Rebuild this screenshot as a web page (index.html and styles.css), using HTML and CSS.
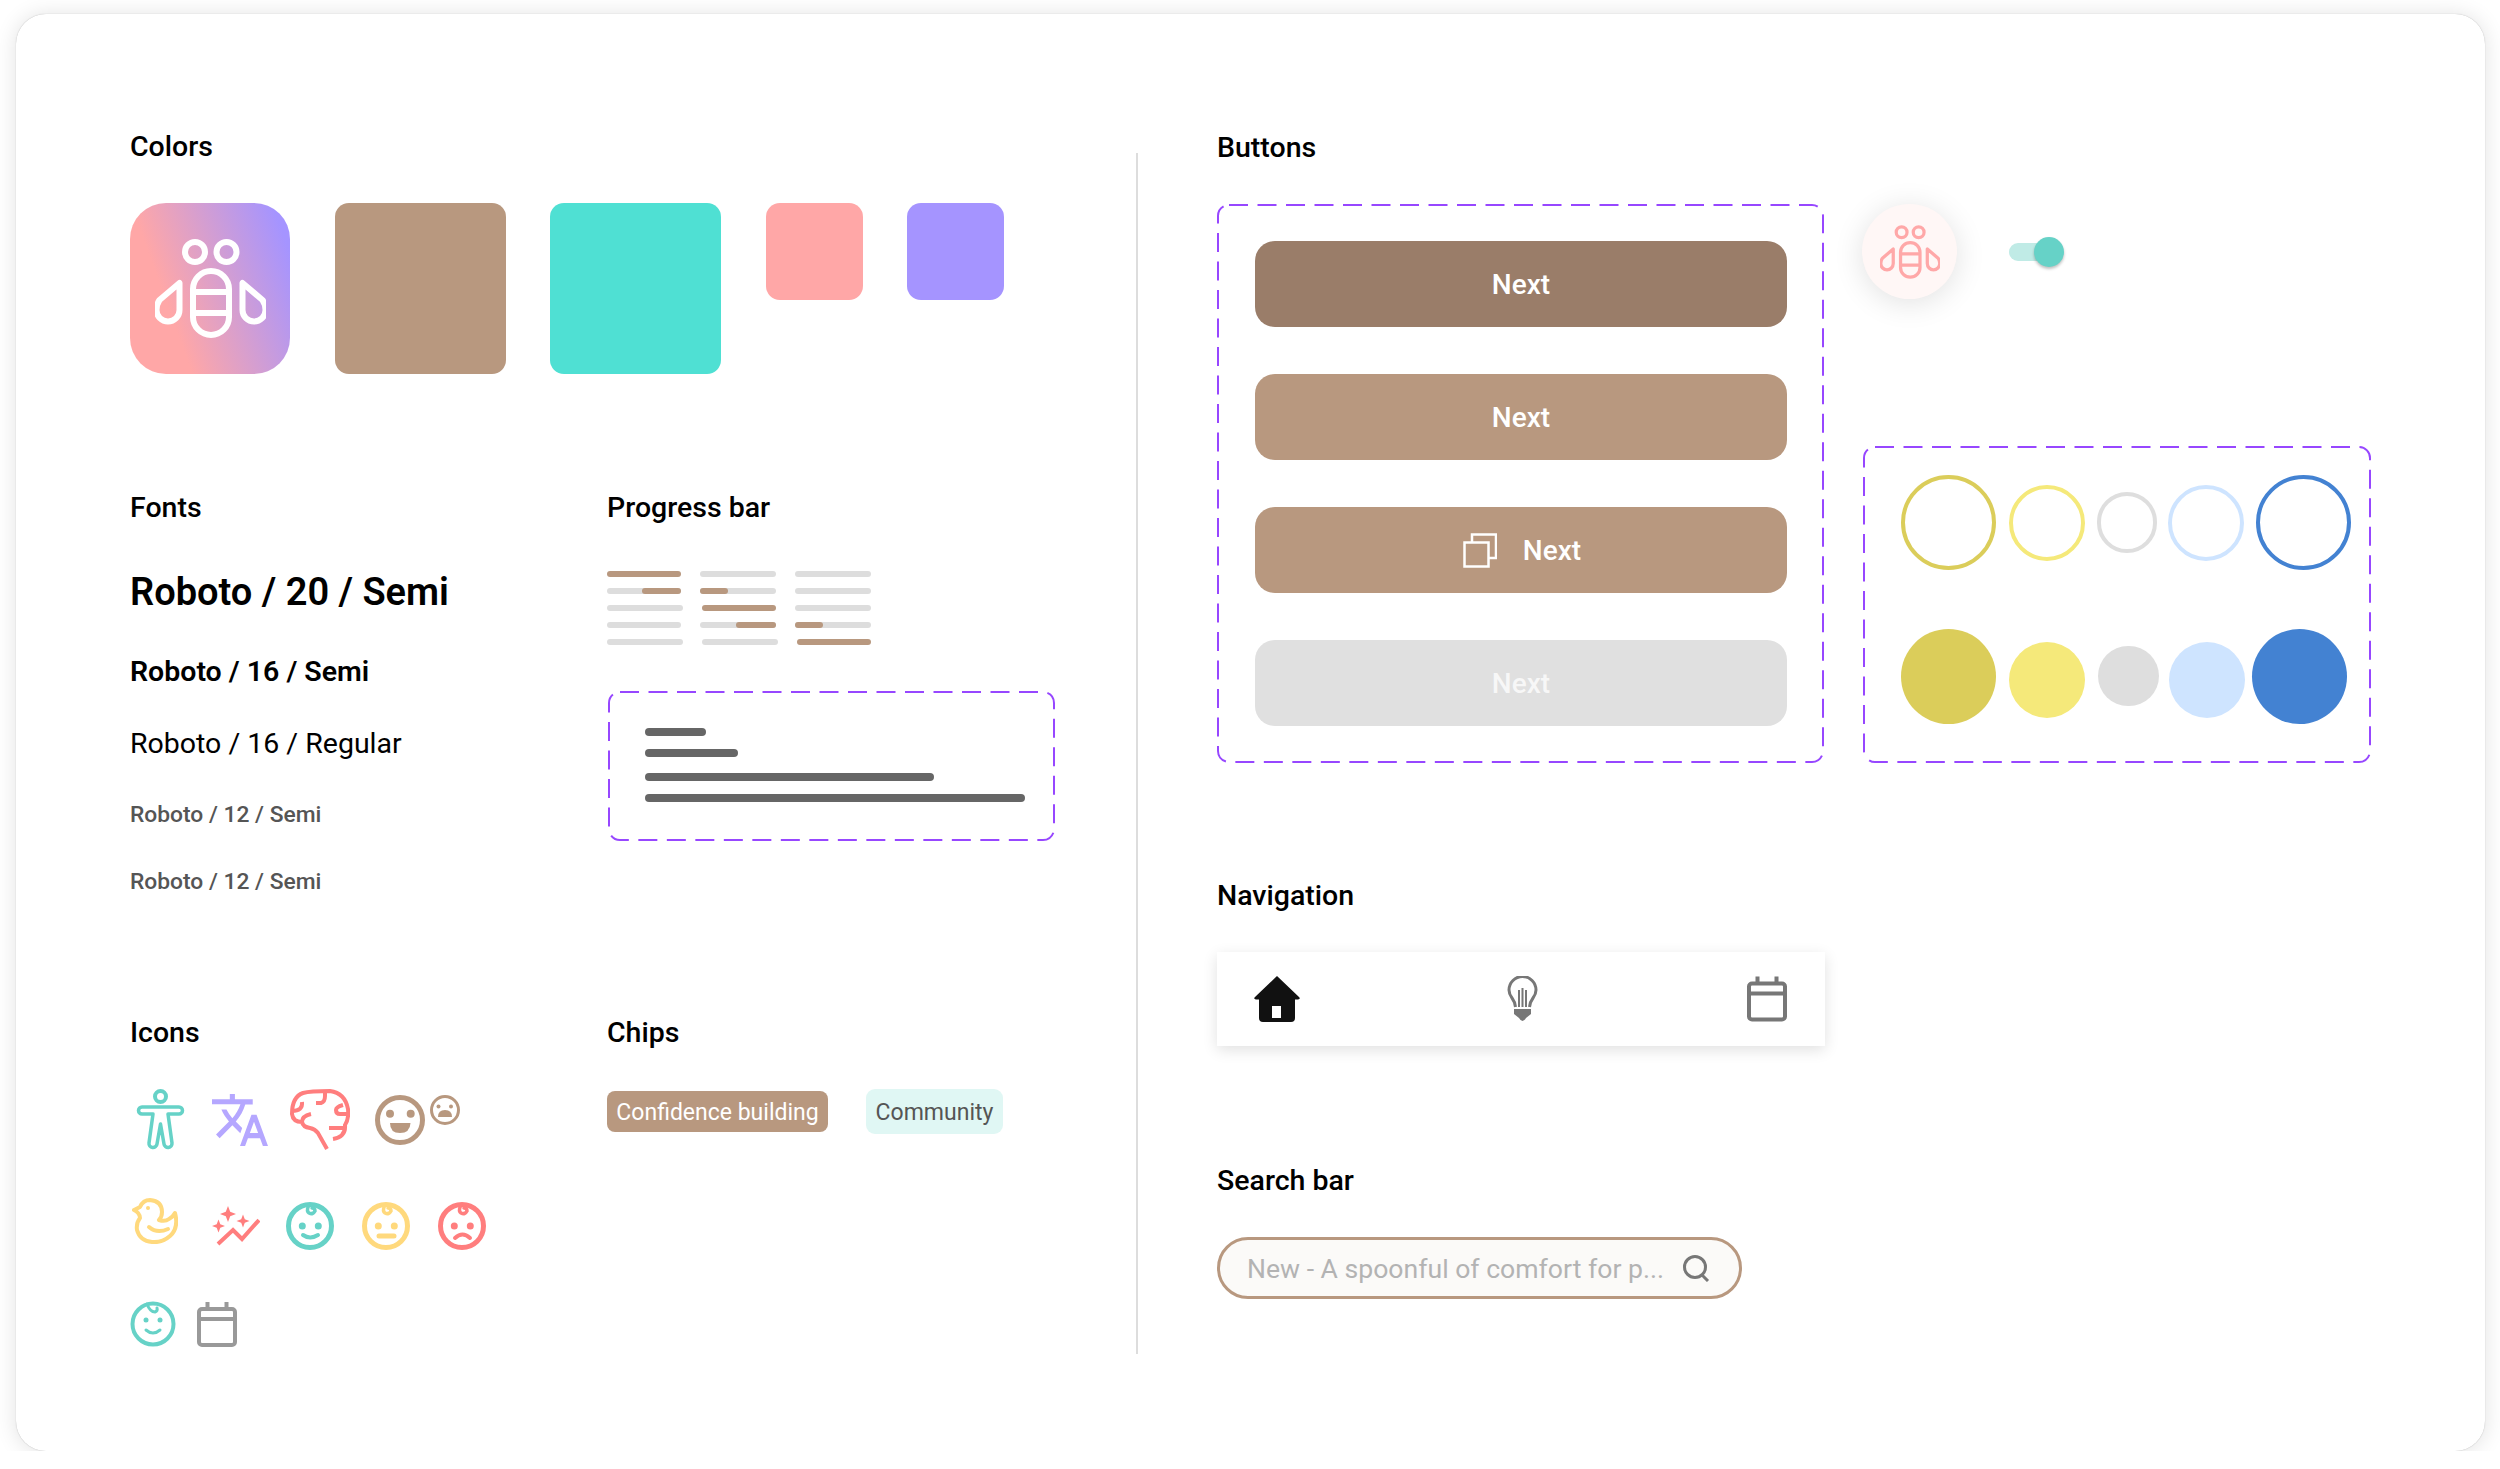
FILE: index.html
```html
<!DOCTYPE html>
<html lang="en">
<head>
    <meta charset="UTF-8" />
    <title>Style guide</title>
    <link rel="stylesheet" href="styles.css">
</head>
<body>

<svg class="defs" aria-hidden="true">
    <symbol id="bee" viewBox="25 36 111 99">
        <g fill="none" stroke="currentColor" stroke-width="6" stroke-linejoin="round">
            <circle cx="65" cy="49" r="10" />
            <circle cx="96.5" cy="49" r="10" />
            <rect x="63" y="68" width="36" height="64" rx="18" />
            <path d="M63 89H99M63 110H99" />
            <path d="M49.5 80V107a11.5 11.5 0 0 1-23 0c0-4 1-7 3-10Z" />
            <path d="M112.5 80V107a11.5 11.5 0 0 0 23 0c0-4-1-7-3-10Z" />
        </g>
    </symbol>
    <symbol id="calendar" viewBox="0 0 40 45">
        <g fill="none" stroke="currentColor" stroke-width="4" stroke-linejoin="round">
            <rect x="2" y="7" width="36" height="36" rx="3" />
            <path d="M2 17H38M10.5 0V7M29.5 0V7" />
        </g>
    </symbol>
    <symbol id="baby" viewBox="0 0 48 48">
        <circle cx="24" cy="24" r="21.5" fill="none" stroke="currentColor" stroke-width="5" />
        <path d="M23 3Q20 9 23 11Q27 13 29 9Q29 6 26 6" fill="none" stroke="currentColor" stroke-width="3.5" stroke-linecap="round" />
        <circle cx="16.3" cy="24" r="3.5" fill="currentColor" />
        <circle cx="32.3" cy="24" r="3.5" fill="currentColor" />
    </symbol>
</svg>

<main class="board">
    <div class="col-left">
        <section>
            <h2>Colors</h2>
            <div class="swatches">
                <div class="swatch swatch-logo">
                    <svg class="logo-bee"><use href="#bee" /></svg>
                </div>
                <div class="swatch swatch-brown"></div>
                <div class="swatch swatch-teal"></div>
                <div class="swatch swatch-pink"></div>
                <div class="swatch swatch-purple"></div>
            </div>
        </section>

        <div class="split fonts-row">
            <section class="split-a">
                <h2>Fonts</h2>
                <p class="f20">Roboto / 20 / Semi</p>
                <p class="f16s">Roboto / 16 / Semi</p>
                <p class="f16r">Roboto / 16 / Regular</p>
                <p class="f12 f12-a">Roboto / 12 / Semi</p>
                <p class="f12 f12-b">Roboto / 12 / Semi</p>
            </section>
            <section>
                <h2>Progress bar</h2>
                <div class="progress-set">
                    <div class="progress-col">
                        <div class="track full" style="width:74px"></div>
                        <div class="track end" style="width:74px"><div class="fill" style="width:39px"></div></div>
                        <div class="track" style="width:76px"></div>
                        <div class="track" style="width:74px"></div>
                        <div class="track" style="width:76px"></div>
                    </div>
                    <div class="progress-col mid">
                        <div class="track" style="width:76px"></div>
                        <div class="track" style="width:76px"><div class="fill" style="width:28px"></div></div>
                        <div class="track full shift" style="width:74px"></div>
                        <div class="track end" style="width:76px"><div class="fill" style="width:40px"></div></div>
                        <div class="track shift" style="width:76px"></div>
                    </div>
                    <div class="progress-col">
                        <div class="track" style="width:76px"></div>
                        <div class="track" style="width:76px"></div>
                        <div class="track" style="width:76px"></div>
                        <div class="track" style="width:76px"><div class="fill" style="width:28px"></div></div>
                        <div class="track full shift" style="width:74px"></div>
                    </div>
                </div>
                <div class="dash-box bars-box">
                    <svg class="frame"><rect x="1" y="1" rx="11" /></svg>
                    <div class="bar" style="width:61px"></div>
                    <div class="bar" style="width:93px"></div>
                    <div class="bar bar-gap" style="width:289px"></div>
                    <div class="bar" style="width:380px"></div>
                </div>
            </section>
        </div>

        <div class="split icons-row">
            <section class="split-a">
                <h2>Icons</h2>
                <div class="icon-line line-1">
                    <svg class="ic-access" viewBox="0 0 49 61" fill="none" stroke="#66D2C7">
                        <circle cx="24.5" cy="7.5" r="5.5" stroke-width="4" />
                        <path stroke-width="3.5" stroke-linejoin="round" d="M6 18H43a3.5 3.5 0 0 1 0 7H32L36 54a4 4 0 0 1-8 1L24.5 35 21 55a4 4 0 0 1-8-1L17 25H6a3.5 3.5 0 0 1 0-7Z" />
                    </svg>
                    <svg class="ic-translate" viewBox="1 2 22 20" preserveAspectRatio="none" fill="#B5A7FF">
                        <path d="M12.87 15.07l-2.54-2.51.03-.03c1.74-1.94 2.98-4.17 3.71-6.53H17V4h-7V2H8v2H1v1.99h11.17C11.5 7.92 10.44 9.75 9 11.35 8.07 10.32 7.3 9.19 6.69 8h-2c.73 1.63 1.73 3.17 2.98 4.56l-5.09 5.02L4 19l5-5 3.11 3.11.76-2.04zM18.5 10h-2L12 22h2l1.12-3h4.75L21 22h2l-4.5-12zm-2.62 7l1.62-4.33L19.12 17h-3.24z" />
                    </svg>
                    <svg class="ic-brain" viewBox="0 0 60 61" fill="none" stroke="#FF7E7E" stroke-width="4">
                        <path d="M37 60L28 44Q25 40 20 39Q13 38 12 33Q3 33 2 25Q2 8 13 4Q20 2 40 2Q55 4 58 20Q59 30 55 36Q56 48 43 50" />
                        <path d="M2 22Q13 22 12 13M26 14H31Q35 13 35 7V2M58 25H50Q46 25 46 21Q46 18 53 16M12 33Q12 27 21 25M39 39H55" />
                    </svg>
                    <svg class="ic-smile" viewBox="0 0 50 50" fill="#B8987F">
                        <circle cx="25" cy="25" r="22.5" fill="none" stroke="#B8987F" stroke-width="5" />
                        <circle cx="15" cy="18.7" r="4" />
                        <circle cx="35.7" cy="18.7" r="4" />
                        <path d="M15 28H35.5Q35 38 25 38Q15 38 15 28Z" />
                    </svg>
                    <svg class="ic-sad" viewBox="0 0 30 30" fill="#B8987F">
                        <circle cx="15" cy="15" r="13.5" fill="none" stroke="#B8987F" stroke-width="3" />
                        <circle cx="8.5" cy="11.5" r="2" />
                        <circle cx="21" cy="11.5" r="2" />
                        <path d="M8 22Q8 15 15 15Q22 15 22 22Z" />
                    </svg>
                </div>
                <div class="icon-line line-2">
                    <svg class="ic-duck" viewBox="0 0 46 46" fill="none" stroke="#FFD97D" stroke-width="4" stroke-linejoin="round">
                        <path d="M2 12L8 9Q11 2 18 2Q30 3 30 14Q30 19 27 22Q33 24 37 21Q41 19 43 15Q47 30 38 38Q30 45 20 44Q8 43 5 32Q4 25 8 20Q8 15 2 12Z" />
                        <path d="M17 29Q25 36 36 31" stroke-linecap="round" />
                        <circle cx="16" cy="10" r="2" fill="#FFD97D" stroke="none" />
                    </svg>
                    <svg class="ic-spark" viewBox="0 0 48 41" fill="#FF7E7E">
                        <path d="M16 0L18.2 5.8 24 8 18.2 10.2 16 16 13.8 10.2 8 8 13.8 5.8Z" />
                        <path d="M31 8.5L32.8 13.2 37.5 15 32.8 16.8 31 21.5 29.2 16.8 24.5 15 29.2 13.2Z" />
                        <path d="M6.5 13.5L8.3 18.2 13 20 8.3 21.8 6.5 26.5 4.7 21.8 0 20 4.7 18.2Z" />
                        <path d="M6 38L21 24 30 33 47 14" fill="none" stroke="#FF7E7E" stroke-width="4" />
                    </svg>
                    <svg class="ic-baby baby-teal" viewBox="0 0 48 48">
                        <use href="#baby" />
                        <path d="M17 33Q24 38 32 33" fill="none" stroke="currentColor" stroke-width="4" stroke-linecap="round" />
                    </svg>
                    <svg class="ic-baby baby-yellow" viewBox="0 0 48 48">
                        <use href="#baby" />
                        <path d="M17 34H32" fill="none" stroke="currentColor" stroke-width="5" stroke-linecap="round" />
                    </svg>
                    <svg class="ic-baby baby-red" viewBox="0 0 48 48">
                        <use href="#baby" />
                        <path d="M17 36Q24.5 29 32 36" fill="none" stroke="currentColor" stroke-width="4" stroke-linecap="round" />
                    </svg>
                </div>
                <div class="icon-line line-3">
                    <svg class="ic-baby-sm" viewBox="0 0 46 46" fill="none" stroke="#66D2C7">
                        <circle cx="23" cy="23" r="20.5" stroke-width="4" />
                        <path d="M17 3Q20 11 25 11Q28 10 27 7" stroke-width="3" stroke-linecap="round" />
                        <circle cx="16" cy="19" r="2.5" fill="#66D2C7" stroke="none" />
                        <circle cx="30" cy="19" r="2.5" fill="#66D2C7" stroke="none" />
                        <path d="M16 29Q23 35 30 29" stroke-width="3" stroke-linecap="round" />
                    </svg>
                    <svg class="ic-cal-grey"><use href="#calendar" /></svg>
                </div>
            </section>
            <section>
                <h2>Chips</h2>
                <div class="chips">
                    <span class="chip chip-brown">Confidence building</span>
                    <span class="chip chip-mint">Community</span>
                </div>
            </section>
        </div>
    </div>

    <div class="divider"></div>

    <div class="col-right">
        <section>
            <h2>Buttons</h2>
            <div class="buttons-row">
                <div class="dash-box buttons-box">
                    <svg class="frame"><rect x="1" y="1" rx="11" /></svg>
                    <button class="btn btn-dark">Next</button>
                    <button class="btn">Next</button>
                    <button class="btn">
                        <svg class="ic-copy" viewBox="0 0 34 35" fill="none" stroke="#fff" stroke-width="2.5">
                            <rect x="1.5" y="9.5" width="24" height="24" />
                            <path d="M9 9V1.5H33V25H25.5" />
                        </svg>
                        Next
                    </button>
                    <button class="btn btn-off">Next</button>
                </div>
                <div class="side">
                    <div class="side-top">
                        <div class="bee-fab"><svg class="fab-bee"><use href="#bee" /></svg></div>
                        <div class="toggle"><span class="knob"></span></div>
                    </div>
                    <div class="dash-box dots-box">
                        <svg class="frame"><rect x="1" y="1" rx="11" /></svg>
                        <div class="dot-row outlined">
                            <span class="dot big c-olive"></span>
                            <span class="dot mid c-yellow"></span>
                            <span class="dot small c-grey"></span>
                            <span class="dot mid c-sky"></span>
                            <span class="dot big c-blue"></span>
                        </div>
                        <div class="dot-row solid">
                            <span class="dot big c-olive"></span>
                            <span class="dot mid low c-yellow"></span>
                            <span class="dot small c-grey"></span>
                            <span class="dot mid low c-sky"></span>
                            <span class="dot big c-blue"></span>
                        </div>
                    </div>
                </div>
            </div>
        </section>

        <section class="nav-section">
            <h2>Navigation</h2>
            <nav class="navbar">
                <svg class="ic-home" viewBox="0 0 46 46">
                    <path fill="#111" d="M23 0L45 21Q47 23 44 23.5H41V42Q41 46 37 46H9Q5 46 5 42V23.5H2Q-1 23 1 21Z" />
                    <rect x="18" y="30" width="9" height="12" fill="#fff" />
                </svg>
                <svg class="ic-bulb" viewBox="0 0 31 46" fill="none" stroke="#777" stroke-width="3">
                    <path d="M8.5 31Q8 26 5 22Q2 18 2 14A13.5 13.5 0 0 1 29 14Q29 18 26 22Q23 26 22.5 31" />
                    <path stroke-width="2" d="M12 14V31M15.5 12V31M19 14V31" />
                    <path fill="#777" stroke="none" d="M7 33H24V38L19 42Q15.5 48 12 42L7 38Z" />
                </svg>
                <svg class="ic-cal-nav"><use href="#calendar" /></svg>
            </nav>
        </section>

        <section class="search-section">
            <h2>Search bar</h2>
            <div class="search">
                <span>New - A spoonful of comfort for p...</span>
                <svg class="ic-search" viewBox="0 0 27 27" fill="none" stroke="#777" stroke-width="3">
                    <circle cx="12" cy="12" r="10.5" />
                    <path d="M19 20L25 26" />
                </svg>
            </div>
        </section>
    </div>
</main>

</body>
</html>
```

FILE: styles.css
```css
html, body {
    margin: 0;
    padding: 0;
    background: #fff;
    font-family: Roboto, "Liberation Sans", sans-serif;
    color: #000;
}

.defs {
    position: absolute;
    width: 0;
    height: 0;
}

svg {
    display: block;
    flex: none;
}

/* BOARD */
.board {
    box-sizing: border-box;
    display: flex;
    width: 2469px;
    height: 1437px;
    margin: 14px 0 0 16px;
    padding: 116px 0 0 114px;
    border-radius: 30px;
    background: #fff;
    box-shadow: 0 0 1px rgba(0,0,0,0.3), 0 1px 22px rgba(0,0,0,0.12);
}

.col-left {
    width: 1006px;
    flex: none;
}

.divider {
    width: 2px;
    height: 1201px;
    margin-top: 23px;
    background: #ddd;
    flex: none;
}

.col-right {
    margin-left: 79px;
    padding-top: 1px;
}

h2 {
    margin: 0 0 -2px;
    font-size: 28.5px;
    line-height: 34px;
    font-weight: 500;
}

p {
    margin: 0;
}

.split {
    display: flex;
}

.split-a {
    width: 477px;
    flex: none;
}

.fonts-row {
    margin-top: 117px;
}

.icons-row {
    margin-top: 120px;
}

/* COLORS */
.swatches {
    display: flex;
    gap: 44.5px;
    margin-top: 41px;
}

.swatch {
    width: 97px;
    height: 97px;
    border-radius: 14px;
}

.swatch-logo {
    display: flex;
    align-items: center;
    justify-content: center;
    width: 160px;
    height: 171px;
    border-radius: 36px;
    color: #fff;
    background: linear-gradient(70deg, #FFA7A7 28%, #A594FF 92%);
}

.logo-bee {
    width: 111px;
    height: 99px;
    margin-top: -1px;
}

.swatch-brown {
    width: 171px;
    height: 171px;
    background: #B8987F;
}

.swatch-teal {
    width: 171px;
    height: 171px;
    background: #4FE0D3;
}

.swatch-pink {
    background: #FFA7A7;
}

.swatch-purple {
    background: #A594FF;
}

/* FONTS */
.f20 {
    margin-top: 45px;
    font-size: 38px;
    line-height: 48px;
    font-weight: 600;
}

.f16s {
    margin-top: 38px;
    font-size: 28.5px;
    line-height: 36px;
    font-weight: 600;
}

.f16r {
    margin-top: 36px;
    font-size: 28.5px;
    line-height: 36px;
}

.f12 {
    font-size: 22.8px;
    line-height: 28px;
    font-weight: 500;
    color: #555;
}

.f12-a {
    margin-top: 39px;
}

.f12-b {
    margin-top: 39px;
}

/* PROGRESS */
.progress-set {
    display: flex;
    gap: 17px;
    margin-top: 48px;
}

.progress-col {
    display: flex;
    flex-direction: column;
    gap: 11px;
    width: 76px;
}

.progress-col.mid {
    width: 78px;
}

.track {
    display: flex;
    height: 6px;
    border-radius: 3px;
    background: #DDD;
}

.track.full {
    background: #B8987F;
}

.track.end {
    justify-content: flex-end;
}

.track.shift {
    margin-left: 2px;
}

.fill {
    height: 100%;
    border-radius: 3px;
    background: #B8987F;
}

/* dashed frames use an svg so the dash length can match */
.dash-box {
    position: relative;
    box-sizing: border-box;
}

.frame {
    position: absolute;
    top: 0;
    left: 0;
    width: 100%;
    height: 100%;
    pointer-events: none;
}

.frame rect {
    width: calc(100% - 2px);
    height: calc(100% - 2px);
    fill: none;
    stroke: #9747FF;
    stroke-width: 2;
    stroke-dasharray: 19 9.5;
}

.bars-box {
    width: 447px;
    height: 150px;
    margin: 46px 0 0 1px;
    padding: 37px 0 0 37px;
}

.bar {
    height: 8px;
    margin-bottom: 13px;
    border-radius: 4px;
    background: #666;
}

.bar-gap {
    margin-top: 16px;
}

/* ICONS */
.icon-line {
    display: flex;
    align-items: center;
}

.line-1 {
    height: 61px;
    margin-top: 41px;
}

.line-2 {
    height: 50px;
    margin-top: 51px;
}

.line-3 {
    height: 46px;
    margin-top: 50px;
}

.ic-access {
    width: 49px;
    height: 61px;
    margin-left: 6px;
}

.ic-translate {
    width: 56px;
    height: 52px;
    margin-left: 27px;
}

.ic-brain {
    width: 60px;
    height: 61px;
    margin-left: 22px;
}

.ic-smile {
    width: 50px;
    height: 50px;
    margin-left: 25px;
}

.ic-sad {
    width: 30px;
    height: 30px;
    margin: 0 0 19px 5px;
}

.ic-duck {
    width: 46px;
    height: 46px;
    margin: 0 0 10px 2px;
}

.ic-spark {
    width: 48px;
    height: 41px;
    margin-left: 34px;
}

.ic-baby {
    width: 48px;
    height: 48px;
    margin-left: 28px;
}

.baby-teal {
    color: #66D2C7;
    margin-left: 26px;
}

.baby-yellow {
    color: #FFD97D;
}

.baby-red {
    color: #FF7E7E;
}

.ic-baby-sm {
    width: 46px;
    height: 46px;
}

.ic-cal-grey {
    width: 40px;
    height: 45px;
    margin-left: 21px;
    color: #999;
}

/* CHIPS */
.chips {
    display: flex;
    align-items: center;
    gap: 38px;
    height: 45px;
    margin-top: 41px;
}

.chip {
    display: flex;
    align-items: center;
    justify-content: center;
    box-sizing: border-box;
    padding-top: 2px;
    font-size: 23px;
}

.chip-brown {
    width: 221px;
    height: 41px;
    border-radius: 8px;
    color: #fff;
    background: #B8987F;
}

.chip-mint {
    width: 137px;
    height: 45px;
    border-radius: 9px;
    color: #555;
    background: #E0F7F4;
}

/* BUTTONS */
.buttons-row {
    display: flex;
    margin-top: 41px;
}

.buttons-box {
    display: flex;
    flex-direction: column;
    gap: 47px;
    width: 607px;
    height: 559px;
    padding: 37px 0 0 38px;
}

.btn {
    display: flex;
    align-items: center;
    justify-content: center;
    gap: 26px;
    width: 532px;
    height: 86px;
    padding: 0;
    border: none;
    border-radius: 20px;
    background: #B8987F;
    color: #fff;
    font-family: inherit;
    font-size: 28px;
    font-weight: 500;
}

.btn-dark {
    background: #9A7D69;
}

.btn-off {
    background: #E0E0E0;
    color: rgba(255,255,255,0.75);
}

.ic-copy {
    width: 34px;
    height: 35px;
    margin-left: 2px;
}

/* SIDE: FAB, TOGGLE, DOTS */
.side {
    margin-left: 39px;
}

.side-top {
    display: flex;
    align-items: center;
    height: 95px;
}

.bee-fab {
    display: flex;
    align-items: center;
    justify-content: center;
    width: 95px;
    height: 95px;
    margin-left: -1px;
    border-radius: 50%;
    color: #FFA8A8;
    background: #FFF7F6;
    box-shadow: 0 4px 30px rgba(0,0,0,0.12);
}

.fab-bee {
    width: 60px;
    height: 54px;
}

.toggle {
    position: relative;
    width: 46px;
    height: 18px;
    margin-left: 52px;
    border-radius: 9px;
    background: #C0EBE6;
}

.knob {
    position: absolute;
    top: -6px;
    left: 25px;
    width: 30px;
    height: 30px;
    border-radius: 50%;
    background: #66D2C7;
    box-shadow: 0 2px 3px rgba(0,0,0,0.25);
}

.dots-box {
    width: 508px;
    height: 317px;
    margin-top: 147px;
    padding: 29px 0 0 37.5px;
}

.dot-row {
    display: flex;
    align-items: center;
    height: 95px;
}

.dot {
    box-sizing: border-box;
    border-radius: 50%;
    flex: none;
}

.dot.big {
    width: 95px;
    height: 95px;
}

.dot.mid {
    width: 76px;
    height: 76px;
}

.dot.small {
    width: 60.5px;
    height: 60.5px;
}

.dot.low {
    margin-top: 8px;
}

.outlined .dot {
    border: 4px solid currentColor;
}

.solid {
    margin-top: 58.5px;
}

.solid .dot {
    background: currentColor;
}

.c-olive { color: #DBCD5A; }
.c-yellow { color: #F5E97A; }
.c-grey { color: #DEDEDE; }
.c-sky { color: #CEE4FF; }
.c-blue { color: #4382D2; }

.outlined .dot:nth-child(2) { margin-left: 13px; }
.outlined .dot:nth-child(3) { margin-left: 12px; }
.outlined .dot:nth-child(4) { margin-left: 11px; }
.outlined .dot:nth-child(5) { margin-left: 11.5px; }

.solid .dot:nth-child(2) { margin-left: 13px; }
.solid .dot:nth-child(3) { margin-left: 13.5px; }
.solid .dot:nth-child(4) { margin-left: 10px; }
.solid .dot:nth-child(5) { margin-left: 7.5px; }

/* NAVIGATION */
.nav-section {
    margin-top: 116px;
}

.navbar {
    display: flex;
    align-items: center;
    justify-content: space-between;
    box-sizing: border-box;
    width: 608px;
    height: 94px;
    margin-top: 41px;
    padding: 0 38px 0 37px;
    background: #fff;
    box-shadow: 0 4px 14px rgba(0,0,0,0.12);
}

.ic-home {
    width: 46px;
    height: 46px;
}

.ic-bulb {
    width: 31px;
    height: 46px;
    margin-left: -3px;
}

.ic-cal-nav {
    width: 40px;
    height: 46px;
    color: #777;
}

/* SEARCH */
.search-section {
    margin-top: 118px;
}

.search {
    display: flex;
    align-items: center;
    justify-content: space-between;
    box-sizing: border-box;
    width: 525px;
    height: 62px;
    margin-top: 41px;
    padding: 0 29px 0 27px;
    border: 3px solid #B8987F;
    border-radius: 31px;
    background: #FBFAF8;
    color: #B3B3B3;
    font-size: 26.6px;
}

.ic-search {
    width: 27px;
    height: 27px;
}
```
